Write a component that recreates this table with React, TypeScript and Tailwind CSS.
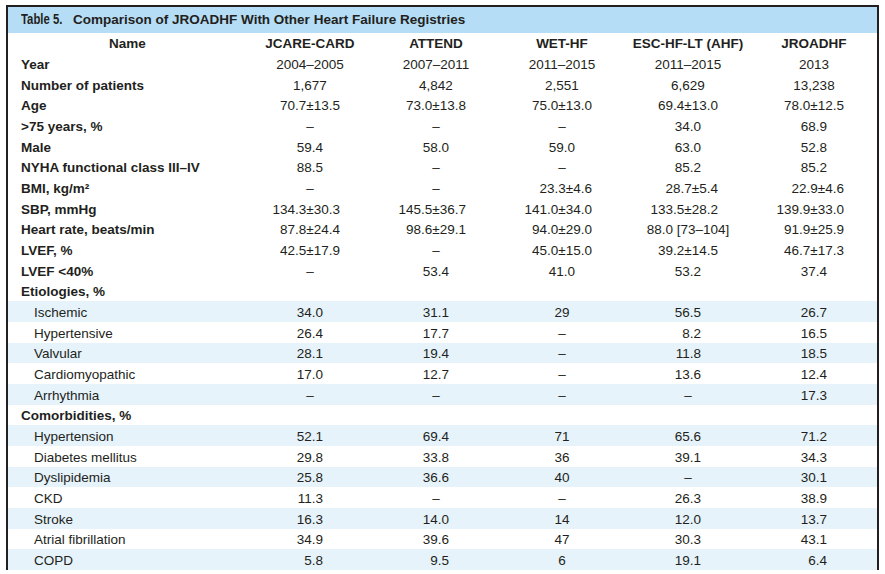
type Row = {
  label: string;
  kind: 'main' | 'group' | 'sub';
  values?: string[];
  striped?: boolean;
};

const columns = ['JCARE-CARD', 'ATTEND', 'WET-HF', 'ESC-HF-LT (AHF)', 'JROADHF'];

const rows: Row[] = [
  { label: 'Year', kind: 'main', values: ['2004–2005', '2007–2011', '2011–2015', '2011–2015', '2013'] },
  { label: 'Number of patients', kind: 'main', values: ['1,677', '4,842', '2,551', '6,629', '13,238'] },
  { label: 'Age', kind: 'main', values: ['70.7±13.5', '73.0±13.8', '75.0±13.0', '69.4±13.0', '78.0±12.5'] },
  { label: '>75 years, %', kind: 'main', values: ['–', '–', '–', '34.0', '68.9'] },
  { label: 'Male', kind: 'main', values: ['59.4', '58.0', '59.0', '63.0', '52.8'] },
  { label: 'NYHA functional class III–IV', kind: 'main', values: ['88.5', '–', '–', '85.2', '85.2'] },
  { label: 'BMI, kg/m²', kind: 'main', values: ['–', '–', '23.3±4.6', '28.7±5.4', '22.9±4.6'] },
  { label: 'SBP, mmHg', kind: 'main', values: ['134.3±30.3', '145.5±36.7', '141.0±34.0', '133.5±28.2', '139.9±33.0'] },
  { label: 'Heart rate, beats/min', kind: 'main', values: ['87.8±24.4', '98.6±29.1', '94.0±29.0', '88.0 [73–104]', '91.9±25.9'] },
  { label: 'LVEF, %', kind: 'main', values: ['42.5±17.9', '–', '45.0±15.0', '39.2±14.5', '46.7±17.3'] },
  { label: 'LVEF <40%', kind: 'main', values: ['–', '53.4', '41.0', '53.2', '37.4'] },
  { label: 'Etiologies, %', kind: 'group' },
  { label: 'Ischemic', kind: 'sub', striped: true, values: ['34.0', '31.1', '29', '56.5', '26.7'] },
  { label: 'Hypertensive', kind: 'sub', values: ['26.4', '17.7', '–', '8.2', '16.5'] },
  { label: 'Valvular', kind: 'sub', striped: true, values: ['28.1', '19.4', '–', '11.8', '18.5'] },
  { label: 'Cardiomyopathic', kind: 'sub', values: ['17.0', '12.7', '–', '13.6', '12.4'] },
  { label: 'Arrhythmia', kind: 'sub', striped: true, values: ['–', '–', '–', '–', '17.3'] },
  { label: 'Comorbidities, %', kind: 'group' },
  { label: 'Hypertension', kind: 'sub', striped: true, values: ['52.1', '69.4', '71', '65.6', '71.2'] },
  { label: 'Diabetes mellitus', kind: 'sub', values: ['29.8', '33.8', '36', '39.1', '34.3'] },
  { label: 'Dyslipidemia', kind: 'sub', striped: true, values: ['25.8', '36.6', '40', '–', '30.1'] },
  { label: 'CKD', kind: 'sub', values: ['11.3', '–', '–', '26.3', '38.9'] },
  { label: 'Stroke', kind: 'sub', striped: true, values: ['16.3', '14.0', '14', '12.0', '13.7'] },
  { label: 'Atrial fibrillation', kind: 'sub', values: ['34.9', '39.6', '47', '30.3', '43.1'] },
  { label: 'COPD', kind: 'sub', striped: true, values: ['5.8', '9.5', '6', '19.1', '6.4'] },
];

// numbers line up on their right edge inside a centred box, like the printed table
const Value = ({ v }: { v: string }) => {
  if (v.includes('±')) {
    return <span className="flex w-[60px] shrink-0 justify-end whitespace-nowrap">{v}</span>;
  }
  if (/^\d+\.\d$/.test(v)) {
    return <span className="flex w-[26px] shrink-0 justify-end whitespace-nowrap">{v}</span>;
  }
  return <span className="whitespace-nowrap">{v}</span>;
};

const TableRow = ({ row }: { row: Row }) => {
  const labelClass =
    row.kind === 'sub' ? 'pl-[26px] font-normal' : 'pl-[13px] font-bold';
  return (
    <div
      className={`grid h-[20.68px] grid-cols-[239px_repeat(5,126px)] pt-[2px] ${
        row.striped ? 'bg-[#e6f3fb]' : 'bg-white'
      }`}
    >
      <div className={`flex items-center whitespace-nowrap ${labelClass}`}>{row.label}</div>
      {columns.map((c, i) => (
        <div key={c} className="flex items-center justify-center">
          {row.values && <Value v={row.values[i]} />}
        </div>
      ))}
    </div>
  );
};

export default function App() {
  return (
    <div className="h-[574px] w-[885px] overflow-hidden bg-white pl-[6px] pt-[5px] font-['Liberation_Sans',Arial,sans-serif] text-[13.5px] leading-none text-[#231f20]">
      <div className="w-[873px] border-2 border-b-0 border-[#231f20]">
        <div className="flex h-[25.7px] items-center bg-[#b5ddf5] pl-[13px] text-[13.5px] font-bold">
          <span className="mr-[10px] inline-block w-[42px] whitespace-nowrap">
            <span className="inline-block origin-left scale-x-[0.84] scale-y-[1.08]">Table 5.</span>
          </span>
          <span className="whitespace-nowrap">Comparison of JROADHF With Other Heart Failure Registries</span>
        </div>

        <div className="grid h-[20.68px] grid-cols-[239px_repeat(5,126px)] pt-[1px] font-bold">
          <div className="flex items-center justify-center">Name</div>
          {columns.map((c) => (
            <div key={c} className="flex items-center justify-center whitespace-nowrap">
              {c}
            </div>
          ))}
        </div>

        {rows.map((r) => (
          <TableRow key={r.label} row={r} />
        ))}
      </div>
    </div>
  );
}
